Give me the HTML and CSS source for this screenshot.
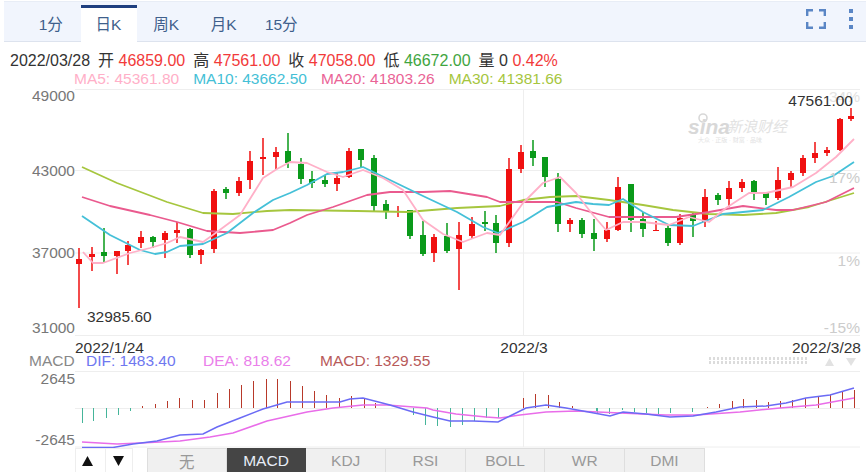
FILE: index.html
```html
<!DOCTYPE html>
<html lang="zh">
<head>
<meta charset="utf-8">
<title>K线图</title>
<link rel="stylesheet" href="styles.css">
</head>
<body>
<header class="toolbar">
  <nav class="periods">
    <span class="period">1分</span>
    <span class="period active">日K</span>
    <span class="period">周K</span>
    <span class="period">月K</span>
    <span class="period">15分</span>
  </nav>
  <div class="tools">
    <svg class="icon-full" width="20" height="20" viewBox="0 0 20 20"><path d="M1.200 7V1.200H7M13 1.200h5.800V7M18.800 13v5.800H13M7 18.800H1.200V13" fill="none" stroke="#5a86c5" stroke-width="2.400"/></svg>
    <svg class="icon-more" width="4" height="20" viewBox="0 0 4 20"><path d="M0 0h4v4H0zM0 8h4v4H0zM0 16h4v4H0z" fill="#5a86c5"/></svg>
  </div>
</header>
<section class="info">
  <div class="quote"><span>2022/03/28</span><span class="k"> 开 </span><b class="up">46859.00</b><span class="k"> 高 </span><b class="up">47561.00</b><span class="k"> 收 </span><b class="up">47058.00</b><span class="k"> 低 </span><b class="down">46672.00</b><span class="k"> 量 0 </span><b class="up">0.42%</b></div>
  <div class="averages"><span class="ma5">MA5: 45361.80</span><span class="ma10">MA10: 43662.50</span><span class="ma20">MA20: 41803.26</span><span class="ma30">MA30: 41381.66</span></div>
</section>
<svg class="chart" width="866" height="361" viewBox="0 87 866 361">
  <path class="grid" d="M75 89.500H860M75 170.500H860M75 253H860M75 335.500H860M523.500 89V335M75 371.500H860M75 408.500H860M75 447H860M523.500 371V447"/>
  <g class="mark">
    <circle cx="703" cy="118" r="4" fill="none" stroke="#d8d8d8" stroke-width="1.600"/>
    <text class="mark-logo" x="688" y="134">sina</text>
    <text class="mark-cn" x="727" y="132">新浪财经</text>
    <text class="mark-sub" x="698" y="141.500">大众 · 正版 · 财富 · 品味</text>
  </g>
  <path class="wick-up" d="M79 248V308M92 247V271M117 251V274M128 241V265M141 231V248M165 231V258M177 222V243M201 249V264M214 189V253M239 177V196M250 151V189M263 138V175M276 147V169M337 173V191M349 148V178M398 206V217M434 234V262M459 222V290M472 217V239M509 158V247M521 145V173M570 218V232M607 222V242M618 177V231M656 221V231M680 214V245M705 189V227M729 181V207M742 179V192M778 167V200M791 171V187M803 155V176M815 142V163M827 147V156M840 118V151M851 108V121"/>
  <path class="body-up" d="M76 259h6v5h-6zM89 254h6v3h-6zM114 251h6v5h-6zM125 245h6v6h-6zM138 237h6v6h-6zM162 233h6v7h-6zM174 230h6v3h-6zM198 250h6v5h-6zM211 191h6v58h-6zM236 181h6v12h-6zM247 161h6v19h-6zM260 157h6v2h-6zM273 152h6v5h-6zM334 178h6v6h-6zM346 151h6v26h-6zM395 211h6v1h-6zM431 237h6v16h-6zM456 235h6v14h-6zM469 224h6v12h-6zM506 169h6v74h-6zM518 152h6v17h-6zM567 220h6v4h-6zM604 230h6v9h-6zM615 187h6v43h-6zM653 230h6v1h-6zM677 218h6v25h-6zM702 197h6v25h-6zM726 188h6v11h-6zM739 182h6v6h-6zM775 180h6v18h-6zM788 173h6v7h-6zM800 158h6v15h-6zM812 153h6v5h-6zM824 150h6v3h-6zM837 119h6v31h-6zM848 116h6v3h-6z"/>
  <path class="wick-down" d="M104 228V263M153 236V248M190 228V258M226 187V199M288 133V168M301 158V184M312 171V188M325 175V187M361 149V167M374 155V211M386 200V219M410 210V239M423 221V256M447 223V253M485 211V231M496 215V253M533 140V166M545 157V187M558 173V232M582 218V238M594 219V251M631 184V232M643 212V237M668 225V246M693 212V237M718 193V205M754 180V200M766 193V205"/>
  <path class="body-down" d="M101 252h6v4h-6zM150 237h6v5h-6zM187 229h6v26h-6zM223 189h6v4h-6zM285 151h6v12h-6zM298 164h6v15h-6zM309 179h6v4h-6zM322 180h6v4h-6zM358 149h6v11h-6zM371 158h6v48h-6zM383 204h6v7h-6zM407 210h6v26h-6zM420 235h6v19h-6zM444 236h6v15h-6zM482 222h6v2h-6zM493 223h6v20h-6zM530 151h6v7h-6zM542 157h6v20h-6zM555 179h6v45h-6zM579 220h6v14h-6zM591 233h6v6h-6zM628 184h6v36h-6zM640 219h6v10h-6zM665 228h6v15h-6zM690 215h6v6h-6zM715 195h6v5h-6zM751 181h6v12h-6zM763 193h6v5h-6z"/>
  <polyline class="line l30" points="82,167 117,183 167,202 203,213 233,214 267,211 290,210 357,211 407,212 457,208 500,206 523,200 550,197 576,196 609,200 643,205 673,210 709,214 743,215 776,213 809,207 854,193"/>
  <polyline class="line l20" points="82,197 110,206 150,215 177,222 207,231 240,233 273,230 290,223 307,215 333,207 367,195 390,192 423,192 450,191 487,197 500,202 523,202 557,202 576,208 609,217 643,217 676,217 709,212 743,206 776,210 793,210 826,202 854,188"/>
  <polyline class="line l10" points="82,216 110,235 140,250 155,254 167,252 180,246 203,244 227,233 253,213 273,200 290,193 307,185 327,174 343,172 363,167 390,180 423,196 457,212 483,227 498,233 523,222 547,207 576,202 593,204 609,205 623,199 643,212 669,225 693,226 723,214 763,210 789,197 816,182 833,176 854,162"/>
  <polyline class="line l5" points="83,252 93,263 103,263 130,253 150,248 167,243 180,237 203,242 217,232 240,215 263,178 277,169 290,162 307,163 327,172 343,177 363,170 383,178 403,190 423,220 443,234 463,242 487,233 500,235 523,203 543,183 560,177 576,193 593,215 606,230 623,222 643,222 669,225 689,217 709,222 726,208 749,193 766,193 793,187 816,173 836,157 854,139"/>
  <g class="axis">
    <text x="75" y="101">49000</text>
    <text x="75" y="175.500">43000</text>
    <text x="75" y="257.500">37000</text>
    <text x="75" y="332.500">31000</text>
    <text x="75" y="384">2645</text>
    <text x="75" y="445">-2645</text>
  </g>
  <g class="pct">
    <text class="pct-faint" x="860" y="102">34%</text>
    <text x="860" y="183">17%</text>
    <text x="860" y="265.500">1%</text>
    <text x="860" y="332.500">-15%</text>
  </g>
  <text class="label" x="853" y="105.500" text-anchor="end">47561.00</text>
  <text class="label" x="87" y="321.500">32985.60</text>
  <text class="label" x="75" y="352.500">2022/1/24</text>
  <text class="label" x="524" y="352.500" text-anchor="middle">2022/3</text>
  <text class="label" x="861" y="352.500" text-anchor="end">2022/3/28</text>
  <text class="leg leg-name" x="29" y="366">MACD</text>
  <text class="leg leg-dif" x="86" y="366">DIF: 1483.40</text>
  <text class="leg leg-dea" x="203" y="366">DEA: 818.62</text>
  <text class="leg leg-macd" x="320" y="366">MACD: 1329.55</text>
  <path class="dots" d="M709 358.500H808M709 362.500H808"/>
  <path class="tri" d="M825 366l4.500-8 4.500 8zM846 358h10l-5 8z"/>
  <g class="hist">
    <path class="hist-down" d="M82 408V423M93 408V421M106 408V418M118 408V415M130 408V411M413 408V415M425 408V425M437 408V426M450 408V427M462 408V425M474 408V421M486 408V418M498 408V418M596 408V411M597 408V413M609 408V414M622 408V410M634 408V412M646 408V413M658 408V414M670 408V413M692 408V412"/>
    <path class="hist-up" d="M142 408V406M155 408V404M167 408V401M179 408V398M192 408V400M204 408V400M217 408V393M229 408V389M241 408V385M253 408V381M266 408V379M277 408V379M290 408V381M302 408V386M314 408V391M326 408V395M339 408V398M351 408V396M364 408V398M375 408V403M523 408V398M535 408V394M548 408V395M559 408V402M572 408V406M707 408V407M719 408V404M732 408V401M743 408V399M756 408V400M768 408V402M780 408V401M792 408V400M805 408V398M818 408V396M830 408V395M842 408V392M854 408V390"/>
  </g>
  <polyline class="mline dea" points="82,442 117,444 140,443 180,441 210,437 233,433 267,421 307,412 333,408 363,405 387,405 427,408 433,410 456,414 486,417 500,418 520,415 546,412 576,411 620,413 666,415 696,415 740,412 780,408 816,405 854,398"/>
  <polyline class="mline dif" points="82,447.500 113,447.500 133,444 157,441 180,435 203,434 217,427 240,418 263,409 287,402 340,402 350,399 363,398 390,405 413,412 433,417 450,421 473,421 498,422 510,416 526,408 546,405 566,408 583,411 610,416 623,412 646,414 670,417 693,416 716,412 740,407 766,406 786,403 806,398 830,395 854,388"/>
</svg>
<footer class="bottom">
  <div class="sorter">
    <span class="sort-btn first"><svg width="11" height="10" viewBox="0 0 11 10"><path d="M5.500 0L11 10H0z"/></svg></span>
    <span class="sort-btn"><svg width="11" height="10" viewBox="0 0 11 10"><path d="M0 0h11L5.500 10z"/></svg></span>
  </div>
  <div class="indicators">
    <span class="ind">无</span>
    <span class="ind on">MACD</span>
    <span class="ind">KDJ</span>
    <span class="ind">RSI</span>
    <span class="ind">BOLL</span>
    <span class="ind">WR</span>
    <span class="ind">DMI</span>
  </div>
</footer>
</body>
</html>
```
FILE: styles.css
```css
* { box-sizing: border-box; }
html, body { margin: 0; padding: 0; background: #fff; }
body {
  width: 866px;
  height: 472px;
  overflow: hidden;
  font-family: "Liberation Sans", "Noto Sans CJK SC", sans-serif;
  color: #333;
}
.toolbar {
  display: flex;
  align-items: stretch;
  justify-content: space-between;
  height: 41px;
  margin: 1px 0 0 4px;
  padding: 3px 13px 0 18px;
  background: #f1f5fd;
  border-bottom: 1px solid #dde3ee;
  border-top: 1px solid #e8edf6;
}
.periods { display: flex; }
.period {
  width: 57.500px;
  display: flex;
  align-items: center;
  justify-content: center;
  padding-bottom: 4px;
  margin-bottom: -1px;
  font-size: 15.500px;
  color: #3f5f8c;
  border-top: 3px solid transparent;
}
.period.active {
  background: #fff;
  border-top-color: #1f3f7f;
  margin-left: 1px;
  width: 56px;
  margin-right: 1px;
}
.tools { display: flex; align-items: center; gap: 23px; padding-bottom: 8px; }
.info { height: 45px; padding-top: 9px; }
.quote { padding-left: 10px; font-size: 16px; line-height: 19px; white-space: pre; }
.quote b { font-weight: 400; }
.k { margin-left: 3.500px; }
.up { color: #f23a3a; }
.down { color: #3fa53f; }
.averages {
  display: flex;
  gap: 14px;
  padding-left: 74px;
  font-size: 15.500px;
  line-height: 17px;
}
.ma5 { color: #ffb0c8; }
.ma10 { color: #45bfd6; }
.ma20 { color: #ea6496; }
.ma30 { color: #a6c63e; }
.chart { display: block; font-family: "Liberation Sans", "Noto Sans CJK SC", sans-serif; }
.grid { stroke: #eeeeee; stroke-width: 1; fill: none; }
.wick-up { stroke: #f01010; stroke-width: 1.500; fill: none; }
.wick-down { stroke: #0a9a1a; stroke-width: 1.500; fill: none; }
.body-up { fill: #f01010; }
.body-down { fill: #0a9a1a; }
.line { fill: none; stroke-width: 1.800; stroke-linejoin: round; }
.l5 { stroke: #ffb0c8; }
.l10 { stroke: #45c0d8; }
.l20 { stroke: #ea5a8e; }
.l30 { stroke: #a6c63e; }
.axis text { font-size: 15.500px; fill: #777; text-anchor: end; }
.pct text { font-size: 15.500px; fill: #ccc; text-anchor: end; }
.pct .pct-faint { fill: #e2e2e2; }
.label { font-size: 15.500px; fill: #333; }
.leg { font-size: 15.500px; }
.leg-name { fill: #888; }
.leg-dif { fill: #6f78f0; }
.leg-dea { fill: #ea80ea; }
.leg-macd { fill: #b85a5a; }
.dots { stroke: #dcdcdc; stroke-width: 3; stroke-dasharray: 2 2; fill: none; }
.tri { fill: #e2e2e2; }
.hist { transform: translateX(0.500px); }
.hist-up { stroke: #b8392a; stroke-width: 1; fill: none; }
.hist-down { stroke: #45b59a; stroke-width: 1; fill: none; }
.mline { fill: none; stroke-width: 1.500; }
.dif { stroke: #6b6bf5; }
.dea { stroke: #e96de9; }
.mark-logo { font-size: 21px; font-weight: 700; font-style: italic; fill: #d8d8d8; }
.mark-cn { font-size: 15px; font-style: italic; fill: #e2e2e2; }
.mark-sub { font-size: 6px; fill: #e2e2e2; }
.bottom { display: flex; height: 24px; padding-left: 75px; gap: 14px; }
.sorter { display: flex; width: 58px; border-left: 1px solid #eee; border-top: 1px solid #eee; border-right: 1px solid #eee; }
.sort-btn {
  display: flex;
  width: 27px;
  align-items: center;
  justify-content: center;
}
.sort-btn.first { width: 30px; padding-right: 5px; border-right: 1px solid #eee; }
.sort-btn svg { fill: #111; }
.indicators { display: flex; }
.ind {
  display: flex;
  align-items: center;
  justify-content: center;
  width: 79.700px;
  background: #f0f0f0;
  border: 1px solid #dedede;
  border-left-width: 0;
  border-bottom: 0;
  font-size: 15.500px;
  color: #999;
}
.ind:first-child { border-left-width: 1px; }
.ind.on { background: #454545; color: #e8eef8; border-color: #454545; }
```
